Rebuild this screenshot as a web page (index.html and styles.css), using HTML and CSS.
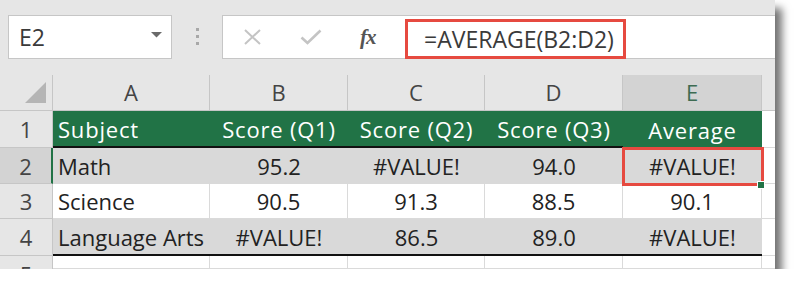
FILE: index.html
```html
<!DOCTYPE html>
<html>
<head>
<meta charset="utf-8">
<link rel="stylesheet" href="styles.css">
</head>
<body>
<div class="window">
  <div class="toolbar">
    <div class="namebox">
      <span class="cellref">E2</span>
      <svg class="dd" width="11" height="6" viewBox="0 0 11 6"><polygon points="0,0 11,0 5.5,5.5" fill="#6a6a6a"/></svg>
    </div>
    <div class="dots"><i></i><i></i><i></i></div>
    <div class="fbar">
      <div class="icons">
        <svg class="cancel" width="19" height="16" viewBox="0 0 19 16"><path d="M2 1 L17 15 M17 1 L2 15" stroke="#c4c4c4" stroke-width="2" fill="none"/></svg>
        <svg class="enter" width="22" height="16" viewBox="0 0 22 16"><path d="M1.5 8.5 L7.5 14 L20.5 1.5" stroke="#c4c4c4" stroke-width="2.6" fill="none"/></svg>
        <span class="fx">fx</span>
      </div>
      <div class="formula">=AVERAGE(B2:D2)</div>
    </div>
  </div>
  <div class="sheet">
    <div class="corner"><svg width="22" height="22" viewBox="0 0 22 22"><polygon points="0,21 21,21 21,0" fill="#b5b5b5"/></svg></div>
    <div class="colh">A</div>
    <div class="colh">B</div>
    <div class="colh">C</div>
    <div class="colh">D</div>
    <div class="colh sel">E</div>
    <div class="colh edge"></div>

    <div class="rowh">1</div>
    <div class="c hd left">Subject</div>
    <div class="c hd">Score (Q1)</div>
    <div class="c hd">Score (Q2)</div>
    <div class="c hd">Score (Q3)</div>
    <div class="c hd last">Average</div>
    <div class="c w edge"></div>

    <div class="rowh selr">2</div>
    <div class="c g left">Math</div>
    <div class="c g">95.2</div>
    <div class="c g">#VALUE!</div>
    <div class="c g">94.0</div>
    <div class="c g active">#VALUE!<span class="handle"></span></div>
    <div class="c w edge"></div>

    <div class="rowh">3</div>
    <div class="c w left">Science</div>
    <div class="c w">90.5</div>
    <div class="c w">91.3</div>
    <div class="c w">88.5</div>
    <div class="c w">90.1</div>
    <div class="c w edge"></div>

    <div class="rowh">4</div>
    <div class="c g left bt">Language Arts</div>
    <div class="c g bt">#VALUE!</div>
    <div class="c g bt">86.5</div>
    <div class="c g bt">89.0</div>
    <div class="c g bt">#VALUE!</div>
    <div class="c w edge"></div>

    <div class="rowh r5">5</div>
    <div class="c w"></div>
    <div class="c w"></div>
    <div class="c w"></div>
    <div class="c w"></div>
    <div class="c w"></div>
    <div class="c w edge"></div>
  </div>
</div>
</body>
</html>
```
FILE: styles.css
```css
html, body {
  margin: 0;
  padding: 0;
  background: #ffffff;
}

.window {
  width: 775px;
  height: 269px;
  background: #e6e6e6;
  box-shadow: 7px 8px 8px rgba(0, 0, 0, 0.55);
  overflow: hidden;
  font-family: "Open Sans", "Noto Sans", sans-serif;
}

.toolbar {
  height: 75px;
  box-sizing: border-box;
  padding: 15px 0 0 8px;
  display: flex;
  align-items: flex-start;
}

.namebox {
  width: 164px;
  height: 44px;
  box-sizing: border-box;
  border: 1px solid #c6c6c6;
  background: #fff;
  display: flex;
  align-items: center;
  justify-content: space-between;
  padding: 0 9px 0 10px;
}

.cellref {
  font-size: 23px;
  color: #3a3a3a;
}

.dd {
  display: block;
  margin-top: -4px;
}

.dots {
  width: 50px;
  padding-top: 13px;
  display: flex;
  flex-direction: column;
  align-items: center;
  gap: 4px;
}

.dots i {
  display: block;
  width: 3px;
  height: 3px;
  background: #a8a8a8;
}

.fbar {
  width: 553px;
  height: 44px;
  box-sizing: border-box;
  border: 1px solid #c6c6c6;
  border-right: none;
  background: #fff;
  display: flex;
  align-items: center;
}

.icons {
  width: 182px;
  display: flex;
  align-items: center;
}

.cancel {
  margin-left: 20px;
}

.enter {
  margin-left: 38px;
}

.fx {
  margin-left: 38px;
  font-family: "Liberation Serif", serif;
  font-style: italic;
  font-weight: bold;
  font-size: 21px;
  color: #555;
  letter-spacing: -1px;
}

.formula {
  align-self: flex-end;
  margin-bottom: -1px;
  width: 221px;
  height: 40px;
  box-sizing: border-box;
  border: 3px solid #e64a40;
  display: flex;
  align-items: center;
  padding-left: 16px;
  font-size: 23px;
  color: #3a3a3a;
  white-space: nowrap;
}

.sheet {
  display: grid;
  grid-template-columns: 53px 157px 138px 137px 138px 139px 13px;
  grid-template-rows: 36px 37px 36px 35px 37px 13px;
  font-size: 22px;
}

.corner {
  display: flex;
  align-items: flex-end;
  justify-content: flex-end;
  padding: 0 5px 6px 0;
  border-right: 1px solid #c6c6c6;
  border-bottom: 1px solid #c6c6c6;
}

.corner svg {
  display: block;
}

.colh {
  display: flex;
  align-items: center;
  justify-content: center;
  border-right: 1px solid #c6c6c6;
  border-bottom: 1px solid #c6c6c6;
  color: #444;
  padding-bottom: 2px;
}

.colh.sel {
  background: #d3d3d3;
  color: #3d6b52;
}

.colh.edge {
  border-right: none;
}

.rowh {
  display: flex;
  align-items: center;
  justify-content: center;
  border-right: 1px solid #c6c6c6;
  border-bottom: 1px solid #c6c6c6;
  color: #444;
  overflow: hidden;
}

.rowh.selr {
  background: #d3d3d3;
  border-right: 2px solid #217346;
}

.rowh.r5 {
  align-items: flex-start;
  padding-top: 3px;
  border-bottom: none;
}

.c {
  display: flex;
  align-items: center;
  justify-content: center;
  white-space: nowrap;
  color: #222;
  box-sizing: border-box;
  position: relative;
}

.c.left {
  justify-content: flex-start;
  padding-left: 5px;
}

.c.hd {
  background: #217346;
  color: #fff;
  border-bottom: 2px solid #111;
  letter-spacing: 0.8px;
}

.c.hd.last {
  border-bottom: none;
}

.c.g {
  background: #d9d9d9;
}

.c.w {
  background: #fff;
  border-right: 1px solid #dadada;
  border-bottom: 1px solid #dadada;
}

.c.edge {
  border-right: none;
}

.c.bt {
  border-bottom: 2px solid #111;
}

.c.active {
  z-index: 2;
}

.c.active::after {
  content: "";
  position: absolute;
  left: -1px;
  top: -1px;
  right: -2px;
  bottom: -2px;
  border: 3px solid #e64a40;
}

.handle {
  position: absolute;
  right: -3px;
  bottom: -5px;
  width: 6px;
  height: 6px;
  background: #217346;
  border: 1px solid #fff;
  z-index: 3;
}
```
